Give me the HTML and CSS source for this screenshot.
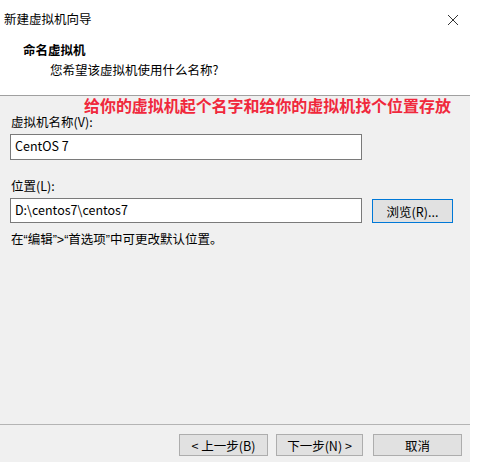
FILE: index.html
```html
<!DOCTYPE html>
<html lang="zh-CN">
<head>
<meta charset="utf-8">
<title>新建虚拟机向导</title>
<link rel="stylesheet" href="styles.css">
</head>
<body>
<div class="window">
  <div class="header">
    <div class="titlebar">
      <span class="title">新建虚拟机向导</span>
      <svg class="close" width="12" height="12" viewBox="0 0 12 12"><path d="M1 1L11 11M11 1L1 11" stroke="#333" stroke-width="1"/></svg>
    </div>
    <div class="heading">命名虚拟机</div>
    <div class="subheading">您希望该虚拟机使用什么名称?</div>
  </div>
  <div class="main">
    <div class="note">给你的虚拟机起个名字和给你的虚拟机找个位置存放</div>
    <div class="label">虚拟机名称(V):</div>
    <div class="input first">CentOS 7</div>
    <div class="label loc">位置(L):</div>
    <div class="row">
      <div class="input">D:\centos7\centos7</div>
      <div class="btn browse">浏览(R)...</div>
    </div>
    <div class="hint">在<span class="q">“</span>编辑<span class="q">”&gt;“</span>首选项<span class="q">”</span>中可更改默认位置。</div>
  </div>
  <div class="footer">
    <div class="btn back">&lt; 上一步(B)</div>
    <div class="btn next">下一步(N) &gt;</div>
    <div class="btn cancel">取消</div>
  </div>
</div>
</body>
</html>
```
FILE: styles.css
```css
html, body {
  margin: 0;
  padding: 0;
  background: #ffffff;
}
body {
  font-family: "Noto Sans CJK SC", "Noto Sans", sans-serif;
  font-size: 12.5px;
  color: #000;
}
.window {
  width: 470px;
  height: 462px;
  display: flex;
  flex-direction: column;
}
.header {
  height: 95px;
  background: #fff;
  border-bottom: 1px solid #a0a0a0;
}
.titlebar {
  height: 38px;
  display: flex;
  align-items: center;
  justify-content: space-between;
}
.title {
  margin-left: 4px;
  line-height: 16px;
}
.close {
  margin-right: 11px;
  margin-top: 1px;
}
.heading {
  margin-left: 23px;
  font-weight: bold;
  line-height: 16px;
  margin-top: 4px;
}
.subheading {
  margin-left: 50px;
  line-height: 16px;
  margin-top: 4px;
}
.main {
  flex: 1;
  background: #f0f0f0;
  border-bottom: 1px solid #b4b4b4;
  padding-left: 10px;
}
.note {
  margin-left: 74px;
  height: 18px;
  line-height: 18px;
  font-size: 16px;
  font-weight: bold;
  color: #f0283c;
  letter-spacing: -0.05px;
}
.label {
  margin-left: 1px;
  line-height: 16px;
  height: 16px;
  margin-top: 0;
}
.label.loc {
  margin-top: 18px;
}
.input {
  box-sizing: border-box;
  width: 352px;
  height: 26px;
  background: #fff;
  border: 1px solid #7a7a7a;
  padding-left: 4px;
  line-height: 22px;
  font-size: 12.5px;
}
.input.first {
  margin-top: 4px;
}
.row {
  display: flex;
  align-items: center;
  margin-top: 4px;
  gap: 10px;
}
.row .input {
  height: 25px;
  line-height: 21px;
}
.btn {
  box-sizing: border-box;
  background: #e1e1e1;
  border: 1px solid #adadad;
  display: flex;
  align-items: center;
  justify-content: center;
}
.browse {
  width: 81px;
  height: 24px;
  border: 1px solid #0078d7;
  margin-top: 1px;
}
.hint {
  margin-top: 8px;
  margin-left: 1px;
  line-height: 16px;
}
.q {
  font-family: "Liberation Sans", sans-serif;
}
.footer {
  height: 37px;
  background: #f0f0f0;
  display: flex;
  align-items: flex-start;
  padding-top: 9px;
  box-sizing: border-box;
  padding-left: 179px;
}
.footer .btn {
  height: 22px;
}
.back { width: 89px; }
.next { width: 87px; margin-left: 8px; }
.cancel { width: 89px; margin-left: 10px; }
```
